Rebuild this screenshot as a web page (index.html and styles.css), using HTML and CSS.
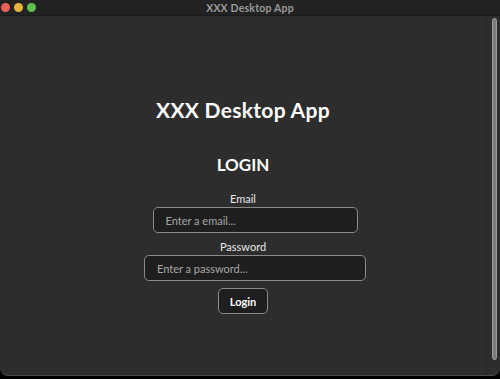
FILE: index.html
```html
<!DOCTYPE html>
<html lang="en">
<head>
  <meta charset="UTF-8" />
  <meta name="viewport" content="width=device-width, initial-scale=1.0"/>
  <title>XXX Desktop App</title>
  <link rel="stylesheet" href="styles.css">
</head>
<body>

<div class="window">
  <div class="title-bar">
    <div class="lights">
      <span class="light red"></span>
      <span class="light yellow"></span>
      <span class="light green"></span>
    </div>
    <div class="title-text">XXX Desktop App</div>
  </div>

  <div class="body-row">
    <div class="content">
      <h1 class="app-title">XXX Desktop App</h1>
      <h2 class="login-title">LOGIN</h2>

      <form class="login-form" onsubmit="return false">
        <label class="field-label" for="email">Email</label>
        <input class="field email" id="email" type="text" placeholder="Enter a email...">

        <label class="field-label" for="password">Password</label>
        <input class="field password" id="password" type="password" placeholder="Enter a password...">

        <button class="login-btn" type="submit">Login</button>
      </form>
    </div>

    <div class="scrollbar">
      <div class="thumb"></div>
    </div>
  </div>
</div>

</body>
</html>
```

FILE: styles.css
```css
* { box-sizing: border-box; }
html, body {
  margin: 0;
  height: 100%;
  background: #000;
}
body {
  font-family: 'Lato', 'Noto Sans', sans-serif;
  color: #fff;
}
.window {
  height: 376px;
  display: flex;
  flex-direction: column;
  background: #2d2d2d;
  border-bottom: 1px solid #4a4a4a;
  border-radius: 0 0 8px 8px;
  overflow: hidden;
}
.title-bar {
  height: 16px;
  background: #222;
  display: flex;
  align-items: center;
  justify-content: center;
  position: relative;
  border-bottom: 1px solid #1a1a1a;
}
.lights {
  position: absolute;
  left: 1px;
  top: 3px;
  display: flex;
  gap: 4px;
}
.light {
  width: 9px;
  height: 9px;
  border-radius: 50%;
}
.light.red { background: #ec5f58; }
.light.yellow { background: #e9b33d; }
.light.green { background: #5fc14d; }
.title-text {
  font-size: 10.5px;
  font-weight: 700;
  color: #9b9b9b;
  letter-spacing: 0.2px;
}
.body-row {
  flex: 1;
  display: flex;
}
.content {
  flex: 1;
  display: flex;
  flex-direction: column;
  align-items: center;
  padding-top: 81px;
}
.app-title {
  margin: 0;
  font-size: 21px;
  font-weight: 700;
  letter-spacing: 0.3px;
}
.login-title {
  margin: 32px 0 0;
  font-size: 17px;
  font-weight: 700;
}
.login-form {
  display: flex;
  flex-direction: column;
  align-items: center;
  margin-top: 17px;
}
.field-label {
  font-size: 11px;
  color: #e8e8e8;
  margin-bottom: 2px;
}
.field {
  height: 26px;
  background: #1e1e1e;
  border: 1px solid #8a8a8a;
  border-radius: 5px;
  color: #fff;
  font-family: inherit;
  font-size: 11px;
  padding: 0 12px;
  margin-bottom: 7px;
  margin-left: 24px;
  outline: none;
}
.field::placeholder { color: #a8a8a8; }
.field.email { width: 205px; }
.field.password { width: 222px; }
.login-btn {
  width: 50px;
  height: 26px;
  background: #1e1e1e;
  border: 1px solid #8a8a8a;
  border-radius: 5px;
  color: #fff;
  font-family: inherit;
  font-size: 11px;
  font-weight: 700;
}
.scrollbar {
  width: 14px;
  padding: 2px 3px 15px 5px;
  background: #2d2d2d;
  border-left: 1px solid #262626;
  display: flex;
}
.thumb {
  flex: 1;
  background: #7c7c7c;
  border-radius: 3px;
  border: 1px solid #9a9a9a;
}
```
